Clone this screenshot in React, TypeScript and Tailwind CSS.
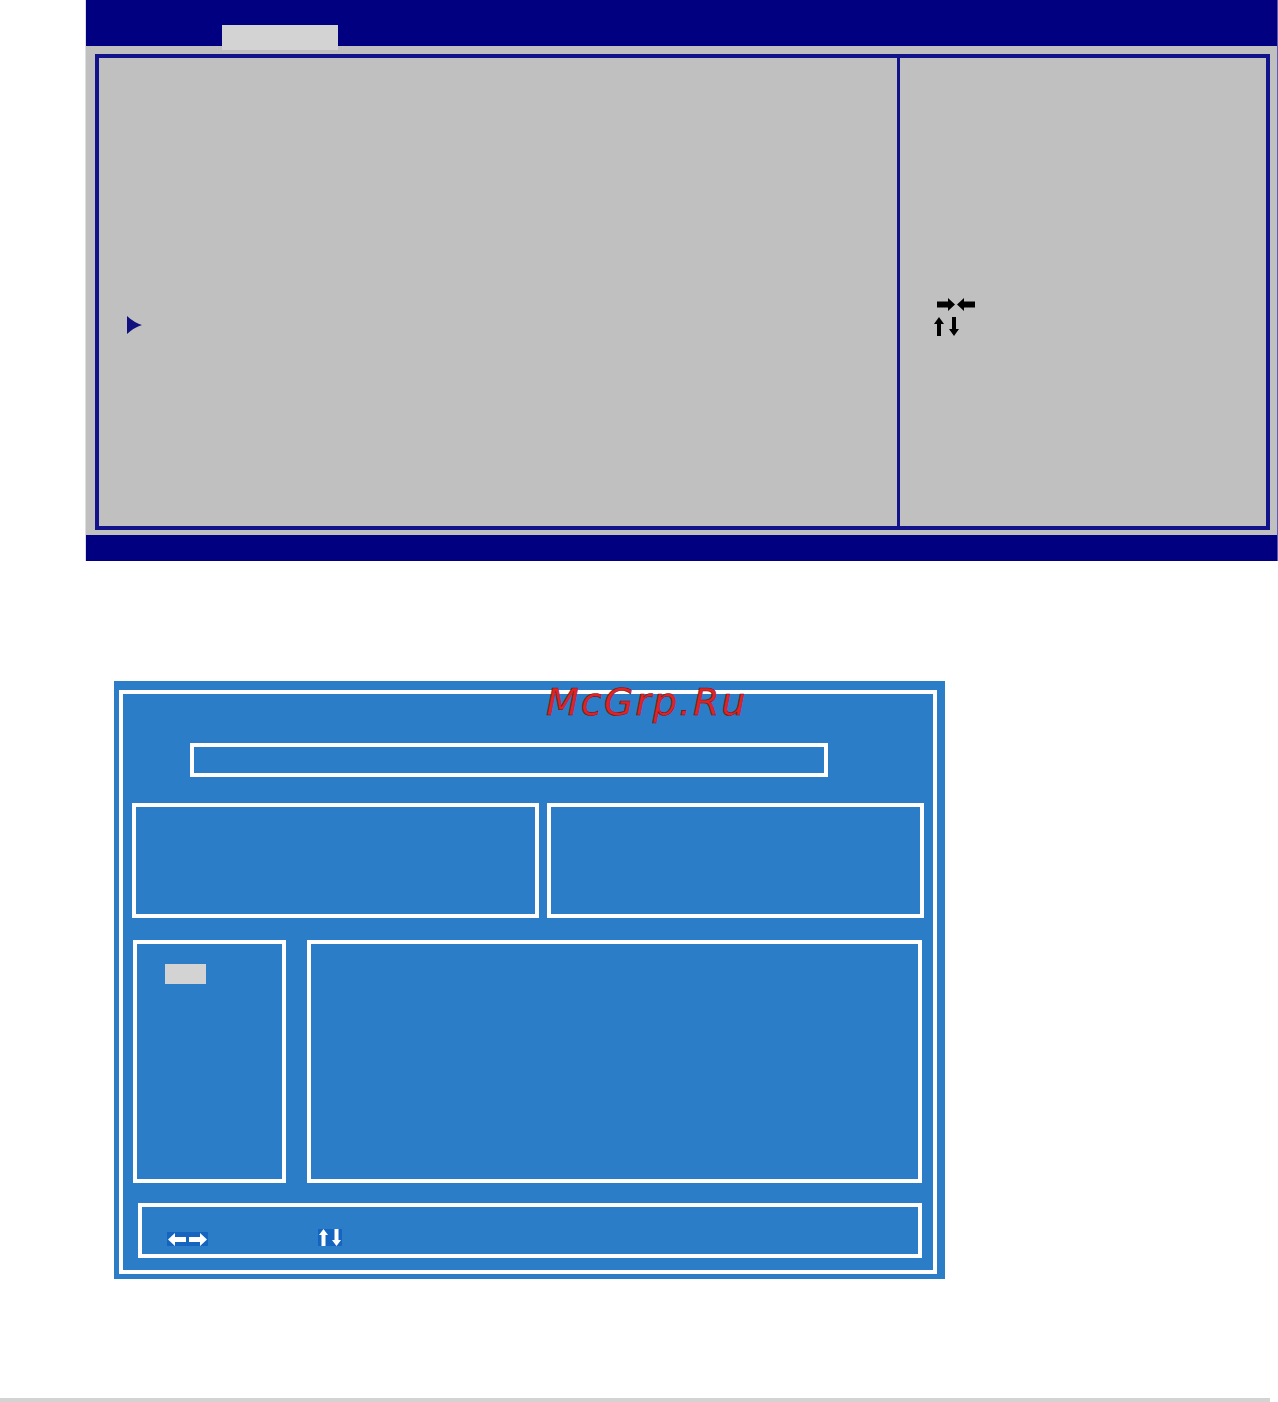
import React from 'react';

function RightLeftArrows() {
  return (
    <svg width="38" height="13" viewBox="0 0 38 13">
      <path d="M0 3.5h11V0l7 6.5-7 6.5V9.5H0z" fill="#000" />
      <path d="M38 3.5H27V0l-7 6.5 7 6.5V9.5h11z" fill="#000" />
    </svg>
  );
}

function UpDownArrows() {
  return (
    <svg width="26" height="19" viewBox="0 0 26 19">
      <path d="M3 19V7H0l5-7 5 7H7v12z" fill="#000" />
      <path d="M18 0v12h-3l5 7 5-7h-3V0z" fill="#000" />
    </svg>
  );
}

function BiosPanel() {
  return (
    <div className="ml-[85px] w-[1193px] border-l border-l-[#dcdce4] border-r border-r-[#5a5ab8]">
      <div className="h-[46px] bg-[#000080] flex items-end pl-[136px]">
        <div className="relative z-10 -mb-[4px] h-[25px] w-[116px] bg-[#d3d3d3]" />
      </div>
      <div className="bg-[#c0c0c0] pt-[8px] pl-[9px] pr-[7px] pb-[5px]">
        <div className="h-[476px] border-4 border-[#12128a] flex">
          <div className="w-[801px] border-r-[3px] border-[#12128a] pt-[258px] pl-[28px]">
            <svg width="15" height="18" viewBox="0 0 15 18">
              <path d="M0 0Q7 6.5 15 9Q7 11.5 0 18z" fill="#10107e" />
            </svg>
          </div>
          <div className="flex-1 pt-[240px] pl-[34px] flex flex-col gap-[6px]">
            <div className="pl-[3px]">
              <RightLeftArrows />
            </div>
            <UpDownArrows />
          </div>
        </div>
      </div>
      <div className="h-[26px] bg-[#000080]" />
    </div>
  );
}

function Box({ className }: { className: string }) {
  return <div className={`border-4 border-white ${className}`} />;
}

function UtilityPanel() {
  return (
    <div className="ml-[114px] mt-[120px] w-[831px] h-[598px] bg-[#2b7dc8] pt-[9px] pl-[5px] pr-[8px] pb-[5px]">
      <div className="h-full border-4 border-white flex flex-col">
        <Box className="mt-[49px] ml-[67px] w-[638px] h-[34px]" />
        <div className="mt-[26px] ml-[9px] flex gap-[8px]">
          <Box className="w-[407px] h-[115px]" />
          <Box className="w-[377px] h-[115px]" />
        </div>
        <div className="mt-[22px] ml-[10px] flex gap-[21px]">
          <div className="w-[153px] h-[243px] border-4 border-white pt-[20px] pl-[28px]">
            <div className="w-[41px] h-[20px] bg-[#d3d3d3]" />
          </div>
          <Box className="w-[615px] h-[243px]" />
        </div>
        <div className="mt-[20px] ml-[15px] w-[784px] h-[55px] border-4 border-white flex items-end pb-[8px] pl-[25px]">
          <div className="w-[41px] h-[14px] bg-[#1565c0] flex items-center justify-center">
            <svg width="39" height="13" viewBox="0 0 39 13">
              <path d="M0 6.5L7 0v4h11v5H7v4z" fill="#fff" />
              <path d="M39 6.5L32 0v4H21v5h11v4z" fill="#fff" />
            </svg>
          </div>
          <div className="ml-[110px] w-[24px] h-[17px] bg-[#1565c0] flex items-center justify-center">
            <svg width="22" height="17" viewBox="0 0 22 17">
              <path d="M2.5 17V6H0l4.5-6L9 6H6.5v11z" fill="#fff" />
              <path d="M15.5 0v11H13l4.5 6 4.5-6h-2.5V0z" fill="#fff" />
            </svg>
          </div>
        </div>
      </div>
    </div>
  );
}

export default function App() {
  return (
    <div className="relative w-[1278px] h-[1402px] bg-white overflow-hidden">
      <BiosPanel />
      <UtilityPanel />
      <div className="mt-[119px] w-[1270px] h-[4px] bg-[#d3d3d3]" />
      <div
        className="absolute left-[546px] top-[683px] text-[38px] italic text-[#e02424] tracking-[2px] leading-none"
        style={{ fontFamily: '"DejaVu Sans", sans-serif', WebkitTextStroke: '0.6px #7a1010' }}
      >
        McGrp.Ru
      </div>
    </div>
  );
}
